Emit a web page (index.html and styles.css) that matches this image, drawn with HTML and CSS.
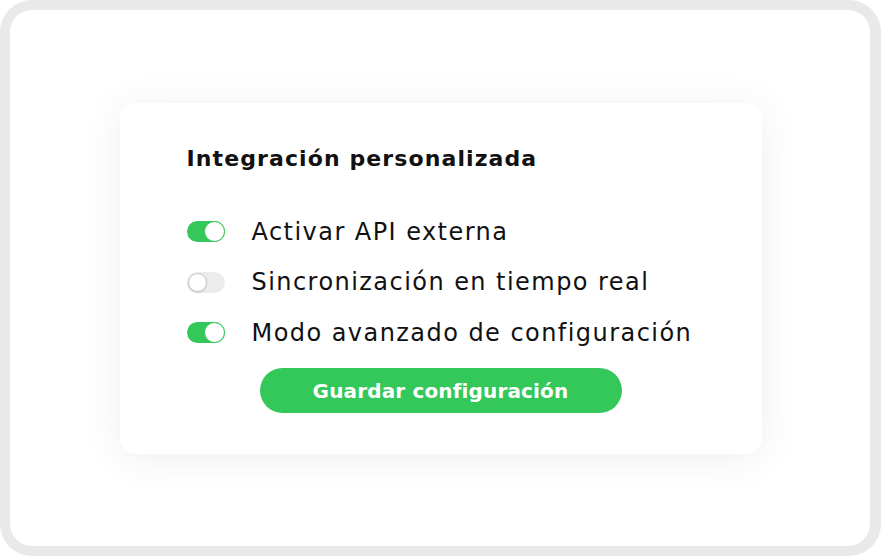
FILE: index.html
```html
<!DOCTYPE html>
<html lang="es">
<head>
<meta charset="utf-8">
<link rel="stylesheet" href="styles.css">
</head>
<body>
<div class="frame">
  <div class="screen">
    <div class="card">
      <h2 class="title">Integración personalizada</h2>
      <ul class="options">
        <li class="option"><span class="toggle on"><span class="knob"></span></span><span class="label">Activar API externa</span></li>
        <li class="option"><span class="toggle"><span class="knob"></span></span><span class="label">Sincronización en tiempo real</span></li>
        <li class="option"><span class="toggle on"><span class="knob"></span></span><span class="label">Modo avanzado de configuración</span></li>
      </ul>
      <button class="save">Guardar configuración</button>
    </div>
  </div>
</div>
</body>
</html>
```

FILE: styles.css
```css
html, body {
  margin: 0;
  padding: 0;
  background: #ffffff;
}
body {
  font-family: "DejaVu Sans", "Inter", sans-serif;
  color: #111111;
}
.frame {
  width: 881px;
  height: 556px;
  box-sizing: border-box;
  padding: 10px 11px 10px 10px;
  background: #e9e9e9;
  border-radius: 32px;
}
.screen {
  width: 100%;
  height: 100%;
  background: #ffffff;
  border-radius: 22px;
  display: flex;
  align-items: center;
  justify-content: center;
}
.card {
  width: 642px;
  height: 351px;
  box-sizing: border-box;
  margin-left: 1px;
  padding: 40px 0 0 67px;
  background: #ffffff;
  border-radius: 16px;
  box-shadow: 0 4px 40px rgba(0, 0, 0, 0.07);
  display: flex;
  flex-direction: column;
}
.title {
  margin: 0;
  font-size: 22px;
  font-weight: 700;
  line-height: 32px;
  letter-spacing: 1.1px;
}
.options {
  list-style: none;
  margin: 32px 0 0 0;
  padding: 0;
  display: flex;
  flex-direction: column;
}
.option {
  height: 50.5px;
  display: flex;
  align-items: center;
}
.toggle {
  width: 38px;
  height: 21px;
  border-radius: 11px;
  background: #ececec;
  position: relative;
  flex: none;
}
.toggle.on {
  background: #34c759;
}
.knob {
  position: absolute;
  top: 1px;
  left: 1px;
  width: 17px;
  height: 17px;
  border-radius: 50%;
  background: #ffffff;
  border: 1px solid #c8c8c8;
  box-shadow: 0 1px 2px rgba(0,0,0,0.12);
}
.toggle.on .knob {
  left: auto;
  right: 0;
  top: 0;
  width: 19px;
  height: 19px;
  border: 1px solid #34c759;
  box-shadow: none;
}
.label {
  margin-left: 27px;
  font-size: 24px;
  line-height: 30px;
  font-weight: 400;
  letter-spacing: 1.45px;
}
.save {
  align-self: flex-start;
  margin: 10px 0 0 73px;
  width: 362px;
  height: 45px;
  border: none;
  border-radius: 23px;
  background: #34c759;
  color: #ffffff;
  font-family: "DejaVu Sans", "Inter", sans-serif;
  font-size: 20px;
  font-weight: 700;
  letter-spacing: 0.15px;
  padding: 0;
}
```
